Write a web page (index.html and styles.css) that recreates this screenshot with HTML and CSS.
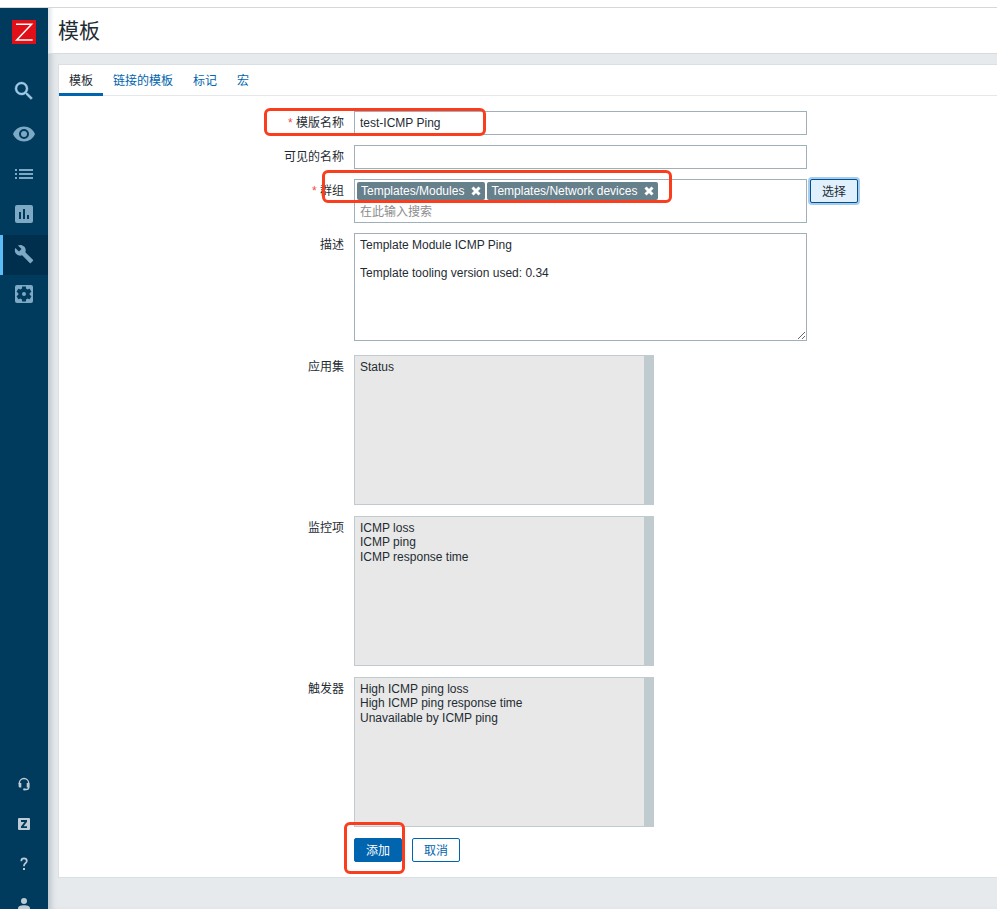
FILE: index.html
```html
<!DOCTYPE html>
<html lang="zh-CN">
<head>
<meta charset="utf-8">
<title>模板</title>
<link rel="stylesheet" href="styles.css">
</head>
<body>
<div class="app">
  <aside class="sidebar">
    <a class="logo" href="#" aria-label="Zabbix">
      <svg viewBox="0 0 24 24" width="24" height="24"><rect width="24" height="24" fill="#e10f17"/><path d="M4 4.300h15.600L4.700 19.900h16" fill="none" stroke="#fff" stroke-width="1.500"/></svg>
    </a>
    <button class="search" type="button" aria-label="搜索">
      <svg viewBox="0 0 24 24" width="24" height="24"><path stroke="#9fcbe5" stroke-width=".4" d="M15.5 14h-.79l-.28-.27A6.47 6.47 0 0 0 16 9.5 6.5 6.5 0 1 0 9.5 16c1.61 0 3.09-.59 4.23-1.57l.27.28v.79l5 4.99L20.49 19l-4.99-5zm-6 0C7.01 14 5 11.99 5 9.5S7.01 5 9.5 5 14 7.01 14 9.5 11.99 14 9.5 14z"/></svg>
    </button>
    <nav class="menu" aria-label="主菜单">
      <a href="#" aria-label="监测"><svg viewBox="0 0 24 24" width="24" height="24"><path d="M12 4.5C7 4.5 2.73 7.61 1 12c1.73 4.39 6 7.5 11 7.5s9.27-3.11 11-7.5c-1.73-4.39-6-7.5-11-7.5zM12 17a5 5 0 1 1 0-10 5 5 0 0 1 0 10zm0-8a3 3 0 1 0 0 6 3 3 0 0 0 0-6z"/></svg></a>
      <a href="#" aria-label="资产记录"><svg viewBox="0 0 24 24" width="24" height="24"><path d="M3 7h2v2H3zM7 7h14v2H7zM3 11h2v2H3zM7 11h14v2H7zM3 15h2v2H3zM7 15h14v2H7z"/></svg></a>
      <a href="#" aria-label="报表"><svg viewBox="0 0 24 24" width="24" height="24"><path d="M19 3H5a2 2 0 0 0-2 2v14a2 2 0 0 0 2 2h14a2 2 0 0 0 2-2V5a2 2 0 0 0-2-2zM9 17H7v-7h2v7zm4 0h-2V7h2v10zm4 0h-2v-4h2v4z"/></svg></a>
      <a class="active" href="#" aria-label="配置"><svg viewBox="0 0 24 24" width="20" height="20"><path d="M22.7 19l-9.1-9.1c.9-2.3.4-5-1.500-6.900-2-2-5-2.400-7.400-1.300L9 6 6 9 1.600 4.700C.4 7.100.9 10.100 2.900 12.100c1.900 1.900 4.600 2.400 6.900 1.500l9.100 9.100c.4.4 1 .4 1.400 0l2.300-2.300c.5-.4.5-1.100.1-1.400z"/></svg></a>
      <a href="#" aria-label="管理"><svg viewBox="0 0 24 24" width="24" height="24"><rect x="3" y="3" width="18" height="18" rx="2"/><path fill="#003a5d" transform="translate(12 12) scale(1.080) translate(-12 -12)" d="M17.250 12c0 .23-.02.46-.05.68l1.480 1.160c.13.11.17.3.08.450l-1.400 2.420c-.09.15-.27.21-.43.15l-1.740-.7c-.36.28-.76.51-1.180.69l-.26 1.850c-.03.17-.18.3-.35.3h-2.800c-.17 0-.32-.13-.35-.29l-.26-1.850c-.43-.18-.82-.41-1.180-.69l-1.740.7c-.16.06-.34 0-.43-.15l-1.400-2.420a.35.35 0 0 1 .08-.450l1.480-1.160A5.700 5.700 0 0 1 6.750 12c0-.23.02-.46.05-.69l-1.480-1.160a.35.35 0 0 1-.08-.450l1.400-2.420c.09-.15.27-.21.43-.15l1.740.7c.36-.28.76-.51 1.180-.69l.26-1.850c.03-.16.18-.29.35-.29h2.800c.17 0 .32.13.35.29l.26 1.850c.43.18.82.41 1.180.69l1.740-.7c.16-.06.34 0 .43.15l1.400 2.420c.09.15.05.34-.08.450l-1.480 1.160c.03.23.05.46.05.69z"/><circle cx="12" cy="12" r="2"/></svg></a>
    </nav>
    <nav class="support" aria-label="用户菜单">
      <a href="#" aria-label="支持"><svg viewBox="0 0 14 14" width="14" height="14"><path d="M2.300 7V6.200a4.700 4.700 0 0 1 9.400 0V10.500q0 2-2.400 2H7" fill="none" stroke="#bccbd6" stroke-width="1.400"/><path d="M1.600 6h2.700v4.500H3q-1.400 0-1.400-1.500zM9.700 6h2.700v4.500H9.700zM6.200 11.500h2.300v1.700H6.200z"/></svg></a>
      <a href="#" aria-label="Share"><svg viewBox="0 0 12 12" width="12" height="12"><path fill-rule="evenodd" d="M1 0h10q1 0 1 1v10q0 1-1 1H1q-1 0-1-1V1q0-1 1-1zM3 2v2h3.500L3 8.500V10h6V8.200H5.600L9 3.700V2z"/></svg></a>
      <a href="#" aria-label="帮助"><svg viewBox="0 0 12 14" width="12" height="14"><path d="M3.300 4.300V4q0-2.600 2.700-2.600T8.800 3.900q0 1.300-1.400 2.300T6 8.800v.5" fill="none" stroke="#bccbd6" stroke-width="1.700"/><path d="M5 11h2v2H5z"/></svg></a>
      <a href="#" aria-label="用户"><svg viewBox="0 0 14 14" width="14" height="14"><circle cx="7" cy="4" r="3"/><path d="M1 13v-1.500C1 9 4 8.300 7 8.300s6 .7 6 3.200V13z"/></svg></a>
    </nav>
  </aside>
  <main class="page">
    <header class="title-bar"><h1>模板</h1></header>
    <form class="panel">
      <nav class="tabs">
        <a class="current" href="#">模板</a>
        <a href="#">链接的模板</a>
        <a href="#">标记</a>
        <a href="#">宏</a>
      </nav>
      <div class="fields">
        <div class="row">
          <label class="required" for="name">模版名称</label>
          <input class="wide" id="name" type="text" value="test-ICMP Ping">
          <span class="mark mark-name"></span>
        </div>
        <div class="row">
          <label for="visible-name">可见的名称</label>
          <input class="wide" id="visible-name" type="text">
        </div>
        <div class="row">
          <label class="required" for="groups">群组</label>
          <div class="group-field">
            <div class="multiselect wide">
              <div class="chips">
                <span class="chip">Templates/Modules<button type="button" aria-label="移除 Templates/Modules"><svg viewBox="0 0 10 10" width="10" height="10"><path d="M1.500 1.500l7 7M8.500 1.500l-7 7"/></svg></button></span>
                <span class="chip">Templates/Network devices<button type="button" aria-label="移除 Templates/Network devices"><svg viewBox="0 0 10 10" width="10" height="10"><path d="M1.500 1.500l7 7M8.500 1.500l-7 7"/></svg></button></span>
              </div>
              <input id="groups" type="text" placeholder="在此输入搜索">
            </div>
            <button class="btn focused" type="button">选择</button>
          </div>
          <span class="mark mark-groups"></span>
        </div>
        <div class="row description">
          <label for="description">描述</label>
          <textarea class="wide" id="description">Template Module ICMP Ping

Template tooling version used: 0.34</textarea>
        </div>
        <div class="row list-row">
          <label for="applications">应用集</label>
          <select id="applications" multiple disabled><option>Status</option></select>
        </div>
        <div class="row list-row">
          <label for="items">监控项</label>
          <select id="items" multiple disabled><option>ICMP loss</option><option>ICMP ping</option><option>ICMP response time</option></select>
        </div>
        <div class="row list-row">
          <label for="triggers">触发器</label>
          <select id="triggers" multiple disabled><option>High ICMP ping loss</option><option>High ICMP ping response time</option><option>Unavailable by ICMP ping</option></select>
        </div>
        <div class="row">
          <div class="actions">
            <button class="btn primary" type="submit">添加</button>
            <button class="btn" type="button">取消</button>
            <span class="mark mark-add"></span>
          </div>
        </div>
      </div>
    </form>
  </main>
</div>
</body>
</html>
```
FILE: styles.css
```css
* {
  box-sizing: border-box;
}

body {
  margin: 0;
  padding-top: 7px;
  background: #fff;
  color: #1f2c33;
  font: 12px/14px "Liberation Sans", "Noto Sans CJK SC", sans-serif;
}

input,
textarea,
select,
button {
  margin: 0;
  color: inherit;
  font: inherit;
}

a {
  color: #0064ae;
  text-decoration: none;
}

svg {
  display: block;
}

.app {
  display: flex;
  height: calc(100vh - 7px);
  border-top: 1px solid #d4d8db;
  background: #e6eaed;
}

/* Sidebar */
.sidebar {
  display: flex;
  flex: none;
  flex-direction: column;
  width: 48px;
  overflow: hidden;
  background: #003a5d;
}

.sidebar svg {
  fill: #7ea9c4;
}

.logo {
  margin: 12px 12px 35px;
}

.search {
  display: flex;
  justify-content: center;
  padding: 0;
  border: 0;
  background: none;
}

.sidebar .search svg {
  fill: #9fcbe5;
}

.menu {
  margin-top: 12px;
}

.menu a,
.support a {
  display: flex;
  align-items: center;
  justify-content: center;
  height: 40px;
}

.menu a {
  padding-bottom: 2px;
}

.menu .active {
  padding-right: 3px;
  border-left: 3px solid #5cbcf7;
  background: #002f4d;
}

.support {
  margin-top: auto;
  margin-bottom: -15px;
}

.sidebar .support svg {
  fill: #bccbd6;
}

/* Page */
.page {
  flex: 1;
  min-width: 0;
  box-shadow: inset 7px 0 6px -4px #b9c3c9;
}

.title-bar {
  padding: 8px 10px 7px;
  border-bottom: 1px solid #d5dbdf;
  background: linear-gradient(to right, #dfe4e7, #fff 6px);
}

h1 {
  margin: 0;
  font-size: 21px;
  font-weight: 400;
  line-height: 30px;
}

.panel {
  margin: 10px 0 0 10px;
  padding-bottom: 15px;
  border: 1px solid #d9dfe2;
  border-right: 0;
  background: #fff;
}

.tabs {
  display: flex;
  border-bottom: 1px solid #e4e8ea;
}

.tabs a {
  height: 30px;
  padding: 8px 10px 0;
  line-height: 16px;
}

.tabs .current {
  height: 31px;
  margin-bottom: -1px;
  border-bottom: 3px solid #0064ae;
  color: #1f2c33;
}

/* Form */
.fields {
  display: grid;
  gap: 10px;
  padding-top: 15px;
}

.row {
  position: relative;
  display: grid;
  grid-template-columns: 285px minmax(0, 1fr);
  column-gap: 10px;
  align-items: start;
}

label {
  padding: 5px 0;
  text-align: right;
}

.required::before {
  content: "* ";
  color: #f04a48;
}

.wide {
  width: 100%;
  max-width: 453px;
}

.row > input,
.multiselect,
textarea {
  border: 1px solid #9fb0b9;
  border-radius: 0;
  background: #fff;
}

.row > input {
  height: 24px;
  padding: 0 5px;
}

.group-field {
  display: flex;
  align-items: flex-start;
  gap: 3px;
}

.multiselect {
  padding: 2px;
}

.chips {
  display: flex;
  gap: 2px;
}

.chip {
  display: flex;
  align-items: center;
  gap: 7px;
  height: 18px;
  padding: 0 4px;
  border-radius: 2px;
  background: #66808c;
  color: #fff;
}

.chip button {
  padding: 0;
  border: 0;
  background: none;
}

.chip path {
  stroke: #fff;
  stroke-width: 3;
}

.multiselect input {
  display: block;
  width: 100%;
  height: 20px;
  padding: 4px 3px 0;
  border: 0;
  background: none;
}

.multiselect input::placeholder {
  color: #8d8d8d;
}

textarea {
  display: block;
  height: 108px;
  padding: 4px 5px;
  resize: both;
}

.description {
  margin-bottom: 4px;
}

select {
  width: 300px;
  max-width: 100%;
  height: 150px;
  padding: 4px 5px;
  border: 1px solid #c0cbd0;
  border-right-width: 10px;
  border-radius: 0;
  background: #e8e8e8;
  overflow: hidden;
}

select:disabled {
  opacity: 1;
}

select option,
select option:disabled {
  padding: 0;
  color: #1f2c33;
}

.list-row {
  margin-bottom: 1px;
}

.btn {
  flex: none;
  width: 48px;
  height: 24px;
  padding: 2px 0 0;
  border: 1px solid #0064ae;
  border-radius: 2px;
  background: #fff;
  color: #0064ae;
}

.btn.primary {
  background: #0064ae;
  color: #fff;
}

.btn.focused {
  border-color: #00518c;
  background: #e0f1fd;
  color: #1f2c33;
  box-shadow: 0 0 0 2px #a6cdf0;
}

.actions {
  position: relative;
  display: flex;
  grid-column: 2;
  gap: 10px;
}

/* Highlight frames drawn over the form */
.mark {
  position: absolute;
  border: 3px solid #fa3d1d;
  border-radius: 6px;
  pointer-events: none;
}

.mark-name {
  top: -3px;
  left: 205px;
  width: 222px;
  height: 28px;
}

.mark-groups {
  top: -9px;
  left: 263px;
  width: 350px;
  height: 33px;
}

.mark-add {
  top: -16px;
  left: -10px;
  width: 61px;
  height: 52px;
}
```
